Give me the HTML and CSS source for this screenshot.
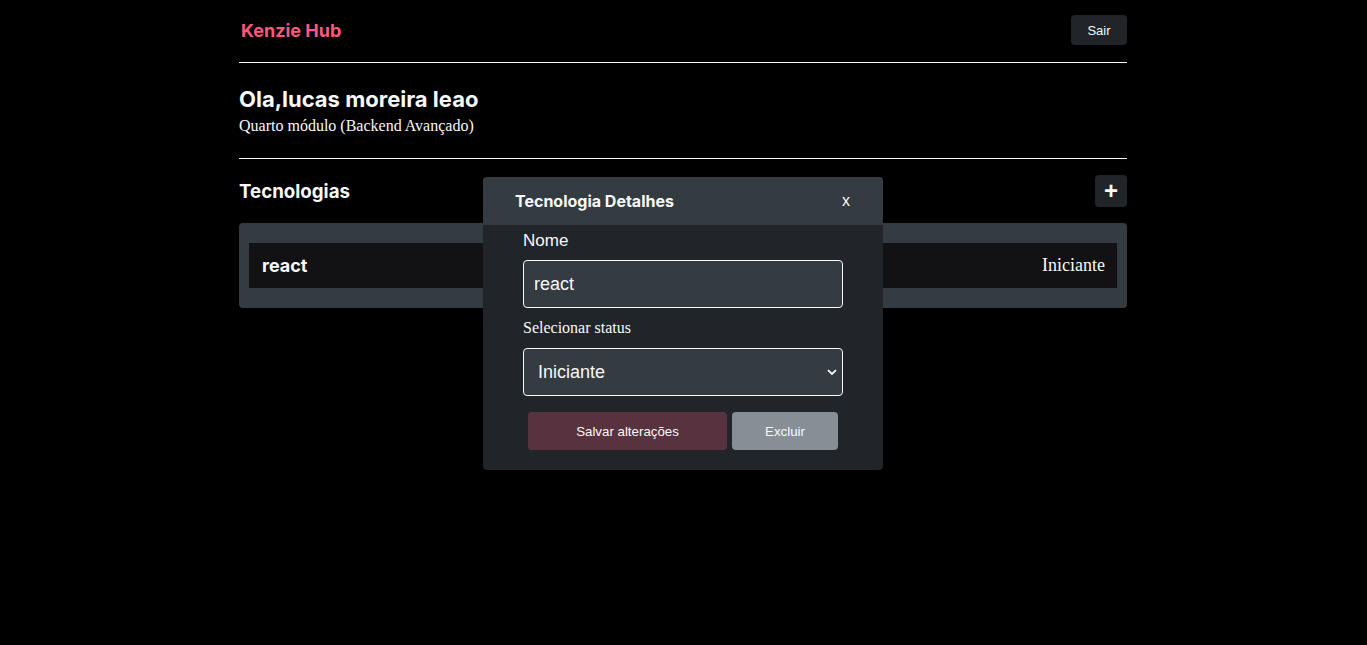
FILE: index.html
```html
<!DOCTYPE html>
<html lang="pt-BR">
<head>
<meta charset="utf-8">
<title>Kenzie Hub</title>
<link rel="stylesheet" href="styles.css">
</head>
<body>
<div class="page">
  <header class="topbar">
    <h1 class="logo">Kenzie Hub</h1>
    <button class="btn-dark">Sair</button>
  </header>
  <hr class="rule">
  <section class="user">
    <h2 class="user-name">Ola,lucas moreira leao</h2>
    <p class="user-module">Quarto módulo (Backend Avançado)</p>
  </section>
  <hr class="rule">
  <section class="techs">
    <div class="techs-head">
      <h3 class="techs-title">Tecnologias</h3>
      <button class="btn-add">+</button>
    </div>
    <ul class="tech-list">
      <li class="tech-item">
        <span class="tech-name">react</span>
        <span class="tech-status">Iniciante</span>
      </li>
    </ul>
  </section>

  <div class="modal">
    <div class="modal-head">
      <h4 class="modal-title">Tecnologia Detalhes</h4>
      <button class="modal-close">x</button>
    </div>
    <div class="modal-body">
      <span class="field-label sans">Nome</span>
      <div class="field">react</div>
      <span class="field-label serif">Selecionar status</span>
      <div class="field select">
        <span>Iniciante</span>
        <svg class="chev" width="10" height="7" viewBox="0 0 10 7"><path d="M1 1.2 L5 5 L9 1.2" fill="none" stroke="#f8f9fa" stroke-width="1.8"/></svg>
      </div>
      <div class="actions">
        <button type="button" class="btn-save">Salvar alterações</button>
        <button type="button" class="btn-del">Excluir</button>
      </div>
    </div>
  </div>
</div>
</body>
</html>
```

FILE: styles.css
```css
* { box-sizing: border-box; }
html, body { margin: 0; padding: 0; background: #000; }
body { font-family: "Liberation Serif", serif; color: #f8f9fa; min-height: 645px; }

.page {
  width: 888px;
  margin-left: calc(50% - 444.5px);
  position: relative;
  min-height: 645px;
}

.topbar {
  height: 62px;
  display: flex;
  align-items: center;
  justify-content: space-between;
}
.logo {
  margin: -2px 0 0 2px;
  font-family: Inter, sans-serif;
  font-size: 18px;
  font-weight: 700;
  color: #ff577f;
}
.btn-dark {
  width: 56px;
  height: 30px;
  margin-top: -2px;
  border: 0;
  border-radius: 4px;
  background: #212529;
  color: #f8f9fa;
  font-family: "Liberation Sans", Arial, sans-serif;
  font-size: 13px;
  padding: 0;
}
.rule {
  margin: 0;
  border: 0;
  height: 1px;
  background: #f8f9fa;
}
.user {
  height: 95px;
  padding-top: 23px;
}
.user-name {
  margin: 0;
  font-family: Inter, sans-serif;
  font-size: 22px;
  font-weight: 700;
  line-height: 26px;
}
.user-module {
  margin: 4px 0 0;
  font-size: 16px;
  line-height: 19px;
}
.techs { padding-top: 16px; }
.techs-head {
  display: flex;
  align-items: center;
  justify-content: space-between;
  height: 32px;
}
.techs-title {
  margin: 0;
  font-family: Inter, sans-serif;
  font-size: 18.7px;
  font-weight: 700;
}
.btn-add {
  width: 32px;
  height: 32px;
  border: 0;
  border-radius: 4px;
  background: #212529;
  color: #f8f9fa;
  font-family: "Liberation Sans", Arial, sans-serif;
  font-size: 24px;
  font-weight: 700;
  line-height: 32px;
  padding: 0;
}
.tech-list {
  list-style: none;
  margin: 16px 0 0;
  padding: 20px 10px;
  background: #343b41;
  border-radius: 4px;
}
.tech-item {
  height: 45px;
  background: #121214;
  display: flex;
  align-items: center;
  justify-content: space-between;
  padding: 0 12px 0 13px;
}
.tech-name {
  font-family: Inter, sans-serif;
  font-size: 18px;
  font-weight: 700;
}
.tech-status { font-size: 18px; }

.modal {
  position: absolute;
  left: 244px;
  top: 177px;
  width: 400px;
  background: #212529;
  border-radius: 4px;
  overflow: hidden;
}
.modal-head {
  height: 48px;
  background: #343b41;
  display: flex;
  align-items: center;
  justify-content: space-between;
  padding: 0 33px 0 32px;
}
.modal-title {
  margin: 0;
  font-family: Inter, sans-serif;
  font-size: 16px;
  font-weight: 700;
}
.modal-close {
  background: none;
  border: 0;
  color: #f8f9fa;
  font-family: "Liberation Sans", Arial, sans-serif;
  font-size: 16px;
  padding: 0;
}
.modal-body {
  display: flex;
  flex-direction: column;
  align-items: flex-start;
  padding: 6px 40px 20px;
}
.field-label {
  font-size: 16px;
  line-height: 18px;
}
.field-label.sans {
  font-family: "Liberation Sans", Arial, sans-serif;
  font-size: 17px;
  line-height: 19px;
}
.field-label.serif { margin-top: 11px; }
.field {
  width: 320px;
  height: 48px;
  margin-top: 10px;
  background: #343b41;
  border: 1px solid #f8f9fa;
  border-radius: 4px;
  color: #f8f9fa;
  font-family: "Liberation Sans", Arial, sans-serif;
  font-size: 18px;
  padding: 0 10px;
  display: flex;
  align-items: center;
  justify-content: space-between;
}
.select {
  margin-top: 11px;
  padding: 0 5px 0 14px;
}
.actions {
  display: flex;
  gap: 5px;
  margin-top: 16px;
  padding-left: 5px;
}
.btn-save, .btn-del {
  height: 38px;
  border: 0;
  border-radius: 4px;
  color: #f8f9fa;
  font-family: "Liberation Sans", Arial, sans-serif;
  font-size: 13.3px;
  padding: 0;
}
.btn-save { width: 199px; background: #59323f; }
.btn-del { width: 106px; background: #868e96; }
```
